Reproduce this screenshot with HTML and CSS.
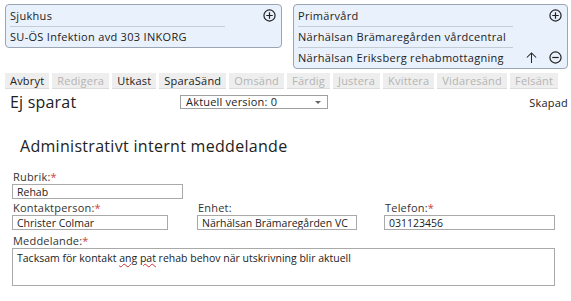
FILE: index.html
```html
<!DOCTYPE html>
<html lang="sv">
<head>
    <meta charset="UTF-8">
    <title>Administrativt internt meddelande</title>
    <link rel="stylesheet" href="styles.css">
</head>
<body>

    <div class="receivers">
        <div class="box box-left">
            <div class="row">
                <span class="cell">Sjukhus</span>
                <span class="icons">
                    <svg class="icon" viewBox="0 0 14 14"><circle cx="7" cy="7" r="6"/><path d="M7 3.5v7M3.5 7h7"/></svg>
                </span>
            </div>
            <div class="row">
                <span class="cell last">SU-ÖS Infektion avd 303 INKORG</span>
            </div>
        </div>
        <div class="box box-right">
            <div class="row">
                <span class="cell">Primärvård</span>
                <span class="icons">
                    <svg class="icon" viewBox="0 0 14 14"><circle cx="7" cy="7" r="6"/><path d="M7 3.5v7M3.5 7h7"/></svg>
                </span>
            </div>
            <div class="row">
                <span class="cell">Närhälsan Brämaregården vårdcentral</span>
            </div>
            <div class="row">
                <span class="cell last">Närhälsan Eriksberg rehabmottagning</span>
                <span class="icons">
                    <svg class="icon arrow" viewBox="0 0 14 14"><path d="M7 13V2M2 7l5-5 5 5"/></svg>
                    <svg class="icon" viewBox="0 0 14 14"><circle cx="7" cy="7" r="6"/><path d="M3.5 7h7"/></svg>
                </span>
            </div>
        </div>
    </div>

    <div class="toolbar">
        <span class="tab">Avbryt</span>
        <span class="tab off">Redigera</span>
        <span class="tab">Utkast</span>
        <span class="tab">SparaSänd</span>
        <span class="tab off">Omsänd</span>
        <span class="tab off">Färdig</span>
        <span class="tab off">Justera</span>
        <span class="tab off">Kvittera</span>
        <span class="tab off">Vidaresänd</span>
        <span class="tab off">Felsänt</span>
    </div>

    <div class="status">
        <span class="saved">Ej sparat</span>
        <div class="select">
            <span>Aktuell version: 0</span>
            <span class="caret"></span>
        </div>
        <span class="created">Skapad</span>
    </div>

    <h1>Administrativt internt meddelande</h1>

    <div class="form">
        <div class="field w-rubrik">
            <label>Rubrik:<em>*</em></label>
            <div class="input">Rehab</div>
        </div>
        <div class="field-row">
            <div class="field w-kontakt">
                <label>Kontaktperson:<em>*</em></label>
                <div class="input">Christer Colmar</div>
            </div>
            <div class="field w-enhet">
                <label>Enhet:</label>
                <div class="input">Närhälsan Brämaregården VC</div>
            </div>
            <div class="field w-telefon">
                <label>Telefon:<em>*</em></label>
                <div class="input">031123456</div>
            </div>
        </div>
        <div class="field w-meddelande">
            <label>Meddelande:<em>*</em></label>
            <div class="input textarea">Tacksam för kontakt <u>ang</u> <u>pat</u> rehab behov när utskrivning blir aktuell</div>
        </div>
    </div>

</body>
</html>
```

FILE: styles.css
```css
body {
    margin: 0;
    background: #fff;
    font-family: 'Open Sans', 'Noto Sans', sans-serif;
    font-size: 11px;
    color: #222;
}

/* mottagare */
.receivers {
    display: flex;
    align-items: flex-start;
    gap: 11px;
    padding: 4px 0 0 5px;
    letter-spacing: 0.3px;
}

.box {
    background: #e9f1fc;
    border: 1px solid #9aa6b4;
    border-radius: 4px;
    padding: 0 4px;
    box-sizing: border-box;
}

.box-left {
    width: 277px;
}

.box-right {
    width: 275px;
}

.row {
    display: flex;
    align-items: center;
    height: 21px;
}

.cell {
    width: 215px;
    height: 21px;
    line-height: 21px;
    border-bottom: 1px solid #c4ccd6;
    white-space: nowrap;
}

.cell.last {
    border-bottom: none;
}

.icons {
    margin-left: auto;
    display: flex;
    gap: 11px;
    padding-right: 1px;
}

.icon {
    width: 13px;
    height: 13px;
    fill: none;
    stroke: #222;
    stroke-width: 1.3;
}

.icon.arrow {
    stroke-width: 1.1;
}

/* knappar */
.toolbar {
    display: flex;
    gap: 3px;
    margin: 4px 0 0 5px;
    letter-spacing: 0.2px;
}

.tab {
    background: #eeeeee;
    border-bottom: 1px solid #dcdcdc;
    padding: 0 5px;
    height: 15px;
    line-height: 15px;
}

.tab.off {
    color: #b4b4b4;
}

.status {
    display: flex;
    align-items: center;
    height: 26px;
    padding-left: 10px;
    letter-spacing: 0.2px;
}

.saved {
    font-size: 16px;
    width: 170px;
}

.select {
    display: flex;
    align-items: center;
    justify-content: space-between;
    width: 148px;
    height: 14px;
    border: 1px solid #a0a0a0;
    padding: 0 5px;
    box-sizing: border-box;
    line-height: 14px;
}

.caret {
    border-left: 3px solid transparent;
    border-right: 3px solid transparent;
    border-top: 3px solid #666;
    margin-right: 1px;
}

.created {
    margin-left: auto;
    padding-right: 3px;
}

h1 {
    font-size: 16px;
    font-weight: normal;
    margin: 20px 0 0 20px;
    letter-spacing: 0.3px;
}

/* formulär */
.form {
    padding: 12px 0 0 12px;
}

.field {
    margin-bottom: 1px;
}

.field label {
    display: block;
    height: 15px;
    line-height: 15px;
    padding-left: 1px;
    color: #333;
    letter-spacing: 0.2px;
}

.field label em {
    font-style: normal;
    color: #d04040;
}

.field-row {
    display: flex;
    margin-bottom: 2px;
}

.input {
    border: 1px solid #a9a9a9;
    height: 15px;
    line-height: 14px;
    padding: 0 4px;
    box-sizing: border-box;
    white-space: nowrap;
    overflow: hidden;
    font-size: 10.5px;
}

.w-rubrik {
    width: 171px;
}

.w-kontakt {
    width: 156px;
    margin-right: 29px;
}

.w-enhet {
    width: 160px;
    margin-right: 27px;
}

.w-telefon {
    width: 171px;
}

.w-meddelande {
    width: 543px;
}

.textarea {
    height: 38px;
    padding-top: 2px;
}

.textarea u {
    text-decoration: underline wavy #d03030;
    text-decoration-thickness: 1px;
}
```
